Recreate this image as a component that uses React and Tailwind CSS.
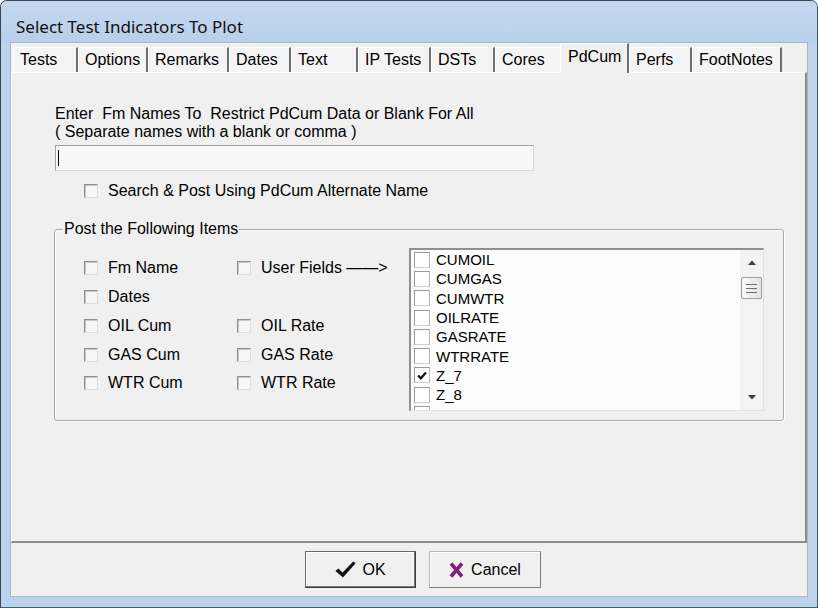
import React from "react";

const tabs = [
  { t: "Tests", w: "w-[65px]" },
  { t: "Options", w: "w-[70px]" },
  { t: "Remarks", w: "w-[81px]" },
  { t: "Dates", w: "w-[62px]" },
  { t: "Text", w: "w-[67px]" },
  { t: "IP Tests", w: "w-[73px]" },
  { t: "DSTs", w: "w-[64px]" },
  { t: "Cores", w: "w-[65px]", nosep: true },
  { t: "PdCum", w: "w-[69px]", sel: true },
  { t: "Perfs", w: "w-[63px]" },
  { t: "FootNotes", w: "w-[90px]" },
];

const listItems = ["CUMOIL", "CUMGAS", "CUMWTR", "OILRATE", "GASRATE", "WTRRATE", "Z_7", "Z_8", "Z_9"];

function Box() {
  return (
    <span className="box-border block w-[14px] h-[14px] shrink-0 border border-t-[#8e8e8e] border-l-[#8e8e8e] border-r-[#dedede] border-b-[#dedede] bg-[#f6f6f6] shadow-[inset_1px_1px_0_#c9c9c9]" />
  );
}

function CheckRow({ label, className = "" }) {
  return (
    <div className={"flex items-center gap-[10px] " + className}>
      <Box />
      <span className="text-[16px] leading-[18px] whitespace-pre">{label}</span>
    </div>
  );
}

function ListBox() {
  return (
    <span className="box-border block w-[16px] h-[16px] shrink-0 border border-t-[#9a9a9a] border-l-[#9a9a9a] border-r-[#b8b8b8] border-b-[#cfcfcf] bg-white" />
  );
}

export default function App() {
  return (
    <div className="w-[818px] h-[608px] box-border border border-[#3a4652] border-b-[#2f6570] border-r-[#2f6570] rounded-t-[7px] bg-[#bdd3ec] flex flex-col overflow-hidden font-['Liberation_Sans',Arial,sans-serif] text-black">
      {/* Title bar */}
      <div className="h-[41px] shrink-0 pl-[15px] pt-[16px] bg-gradient-to-b from-[#c4d8ee] to-[#b9d0ea]">
        <div className="text-[17px] leading-[20px] text-[#111] font-['Noto_Sans',sans-serif]">Select Test Indicators To Plot</div>
      </div>
      {/* Client */}
      <div className="mx-[9px] h-[555px] box-border border border-[#a7b8cb] bg-[#f0f0f0] flex flex-col">
        {/* Tabs */}
        <div className="h-[29px] shrink-0 flex items-end pl-[2px]">
          {tabs.map((tab) =>
            tab.sel ? (
              <div
                key={tab.t}
                className={"relative z-10 box-border h-[30px] -mb-[1px] pl-[7px] pb-[4px] flex items-center bg-[#f0f0f0] border-l border-t border-l-white border-t-white border-r-2 border-r-[#6f6f6f] text-[16px] " + tab.w}
              >
                {tab.t}
              </div>
            ) : (
              <div
                key={tab.t}
                className={
                  "box-border h-[25px] pl-[6px] flex items-center bg-[#f4f4f4] border-l border-t border-l-white border-t-[#fbfbfb] text-[16px] " +
                  (tab.nosep ? "" : "border-r-2 border-r-[#6f6f6f] ") +
                  tab.w
                }
              >
                {tab.t}
              </div>
            )
          )}
        </div>
        {/* Panel */}
        <div className="h-[471px] shrink-0 box-border border-t border-l border-t-white border-l-white border-r-2 border-r-[#8c8c8c] border-b-2 border-b-[#8c8c8c] pl-[43px] pt-[32px] flex flex-col">
          <div className="text-[16px] leading-[18px] h-[18px] whitespace-pre">Enter  Fm Names To  Restrict PdCum Data or Blank For All</div>
          <div className="text-[16px] leading-[18px] h-[18px] whitespace-pre">( Separate names with a blank or comma )</div>
          <div className="mt-[4px] w-[479px] h-[26px] box-border border border-t-[#a0a0a0] border-l-[#a0a0a0] border-r-[#dadada] border-b-[#dadada] bg-[#f8f8f8] flex items-center pl-[2px]">
            <span className="block w-px h-[16px] bg-black" />
          </div>
          <CheckRow className="mt-[11px] ml-[29px] h-[18px]" label="Search & Post Using PdCum Alternate Name" />

          {/* Group box */}
          <div className="relative mt-[29px] -ml-[1px] w-[730px] h-[192px] box-border border border-[#a9a9a9] rounded-[3px] shadow-[inset_1px_1px_0_#ffffff,1px_1px_0_#ffffff] flex">
            <div className="absolute -top-[10px] left-[8px] px-[1px] bg-[#f0f0f0] text-[16px] leading-[18px]">Post the Following Items</div>
            <div className="w-[354px] pl-[29px] pt-[24px] flex flex-col">
              <div className="h-[28.75px] flex items-center">
                <CheckRow className="w-[153px]" label="Fm Name" />
                <CheckRow label="User Fields ——>" />
              </div>
              <div className="h-[28.75px] flex items-center">
                <CheckRow className="w-[153px]" label="Dates" />
              </div>
              <div className="h-[28.75px] flex items-center">
                <CheckRow className="w-[153px]" label="OIL Cum" />
                <CheckRow label="OIL Rate" />
              </div>
              <div className="h-[28.75px] flex items-center">
                <CheckRow className="w-[153px]" label="GAS Cum" />
                <CheckRow label="GAS Rate" />
              </div>
              <div className="h-[28.75px] flex items-center">
                <CheckRow className="w-[153px]" label="WTR Cum" />
                <CheckRow label="WTR Rate" />
              </div>
            </div>
            {/* List */}
            <div className="mt-[18px] w-[355px] h-[163px] box-border flex border-t-2 border-l-2 border-t-[#8f8f8f] border-l-[#8f8f8f] border-r border-b border-r-[#e2e2e2] border-b-[#e2e2e2] bg-[#fcfcfc] overflow-hidden">
              <div className="flex-1 pl-[3px] overflow-hidden">
                {listItems.map((it) => (
                  <div key={it} className="h-[19.3px] flex items-center">
                    <span className="relative block">
                      <ListBox />
                      {it === "Z_7" && (
                        <svg className="absolute left-[3px] top-[4px]" width="10" height="9" viewBox="0 0 10 9">
                          <path d="M1 4.5 L3.8 7.3 L9 1.5" fill="none" stroke="#111" strokeWidth="2.2" />
                        </svg>
                      )}
                    </span>
                    <span className="ml-[6px] text-[15px] leading-none">{it}</span>
                  </div>
                ))}
              </div>
              {/* Scrollbar */}
              <div className="w-[23px] shrink-0 bg-[#f3f3f3] flex flex-col">
                <div className="h-[24px] flex items-center justify-center">
                  <svg width="8" height="5" viewBox="0 0 8 5"><path d="M0 5 L4 0.5 L8 5 Z" fill="#3c3c3c" /></svg>
                </div>
                <div className="mt-[3px] mx-[1px] h-[22px] box-border border border-[#9b9b9b] rounded-[2px] bg-gradient-to-r from-[#fbfbfb] to-[#e4e4e4] flex flex-col items-center justify-center gap-[3px]">
                  <span className="block w-[11px] h-px bg-[#6c6c6c]" />
                  <span className="block w-[11px] h-px bg-[#6c6c6c]" />
                  <span className="block w-[11px] h-px bg-[#6c6c6c]" />
                </div>
                <div className="flex-1" />
                <div className="h-[26px] flex items-center justify-center">
                  <svg width="8" height="5" viewBox="0 0 8 5"><path d="M0 0 L8 0 L4 4.5 Z" fill="#3c3c3c" /></svg>
                </div>
              </div>
            </div>
          </div>
        </div>
        {/* Buttons */}
        <div className="flex-1 pl-[294px] pt-[8px] flex gap-[13px] items-start">
          <button className="w-[111px] h-[37px] box-border border border-t-[#6a6a6a] border-l-[#6a6a6a] border-r-[#3a3a3a] border-b-[#3a3a3a] shadow-[inset_-1px_-1px_0_#7c7c7c,inset_1px_1px_0_#ffffff] bg-[#f0f0f0] flex items-center justify-center gap-[6px] text-[16px]">
            <svg width="21" height="17" viewBox="0 0 21 17">
              <path d="M0.5 10 L3.2 7.6 L7.6 11.6 L18.2 0.6 L20.6 2.2 L8 16.6 Z" fill="#111" />
            </svg>
            <span>OK</span>
          </button>
          <button className="w-[112px] h-[37px] box-border border border-t-[#b5b5b5] border-l-[#b5b5b5] border-r-[#7a7a7a] border-b-[#7a7a7a] shadow-[inset_1px_1px_0_#ffffff] bg-[#f0f0f0] flex items-center justify-center gap-[7px] text-[16px]">
            <svg width="15" height="16" viewBox="0 0 15 16">
              <path d="M2 1.5 L13 14.5 M13 1.5 L2 14.5" stroke="#861d83" strokeWidth="3.6" fill="none" />
            </svg>
            <span>Cancel</span>
          </button>
        </div>
      </div>
      <div className="flex-1" />
    </div>
  );
}
